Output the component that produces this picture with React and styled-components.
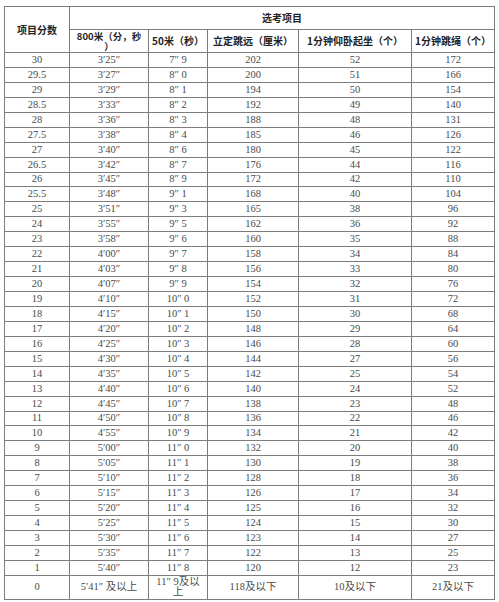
import styled, { createGlobalStyle } from 'styled-components';

const GlobalStyle = createGlobalStyle`
	html, body {
		margin: 0;
		padding: 0;
		background: #fff;
	}
`;

const rows = [
	['30', '3′25″', '7″ 9', '202', '52', '172'],
	['29.5', '3′27″', '8″ 0', '200', '51', '166'],
	['29', '3′29″', '8″ 1', '194', '50', '154'],
	['28.5', '3′33″', '8″ 2', '192', '49', '140'],
	['28', '3′36″', '8″ 3', '188', '48', '131'],
	['27.5', '3′38″', '8″ 4', '185', '46', '126'],
	['27', '3′40″', '8″ 6', '180', '45', '122'],
	['26.5', '3′42″', '8″ 7', '176', '44', '116'],
	['26', '3′45″', '8″ 9', '172', '42', '110'],
	['25.5', '3′48″', '9″ 1', '168', '40', '104'],
	['25', '3′51″', '9″ 3', '165', '38', '96'],
	['24', '3′55″', '9″ 5', '162', '36', '92'],
	['23', '3′58″', '9″ 6', '160', '35', '88'],
	['22', '4′00″', '9″ 7', '158', '34', '84'],
	['21', '4′03″', '9″ 8', '156', '33', '80'],
	['20', '4′07″', '9″ 9', '154', '32', '76'],
	['19', '4′10″', '10″ 0', '152', '31', '72'],
	['18', '4′15″', '10″ 1', '150', '30', '68'],
	['17', '4′20″', '10″ 2', '148', '29', '64'],
	['16', '4′25″', '10″ 3', '146', '28', '60'],
	['15', '4′30″', '10″ 4', '144', '27', '56'],
	['14', '4′35″', '10″ 5', '142', '25', '54'],
	['13', '4′40″', '10″ 6', '140', '24', '52'],
	['12', '4′45″', '10″ 7', '138', '23', '48'],
	['11', '4′50″', '10″ 8', '136', '22', '46'],
	['10', '4′55″', '10″ 9', '134', '21', '42'],
	['9', '5′00″', '11″ 0', '132', '20', '40'],
	['8', '5′05″', '11″ 1', '130', '19', '38'],
	['7', '5′10″', '11″ 2', '128', '18', '36'],
	['6', '5′15″', '11″ 3', '126', '17', '34'],
	['5', '5′20″', '11″ 4', '125', '16', '32'],
	['4', '5′25″', '11″ 5', '124', '15', '30'],
	['3', '5′30″', '11″ 6', '123', '14', '27'],
	['2', '5′35″', '11″ 7', '122', '13', '25'],
	['1', '5′40″', '11″ 8', '120', '12', '23'],
];

const colWidths = [65, 79, 59, 91, 113, 83];

function App() {
	return (
		<>
			<GlobalStyle />
			<Page>
				<Table>
					<colgroup>
						{colWidths.map((w, i) => (
							<col key={i} style={{ width: w }} />
						))}
					</colgroup>
					<thead>
						<tr>
							<HeadCell rowSpan={2}>
								<HeadBox $h={45}>项目分数</HeadBox>
							</HeadCell>
							<HeadCell colSpan={5}>
								<HeadBox $h={22}>选考项目</HeadBox>
							</HeadCell>
						</tr>
						<tr>
							<HeadCell>
								<HeadBox $h={22} $wrap>
									<span>800米（分，秒</span>
									<span>）</span>
								</HeadBox>
							</HeadCell>
							<HeadCell>
								<HeadBox $h={22}>50米（秒）</HeadBox>
							</HeadCell>
							<HeadCell>
								<HeadBox $h={22}>立定跳远（厘米）</HeadBox>
							</HeadCell>
							<HeadCell>
								<HeadBox $h={22}>1分钟仰卧起坐（个）</HeadBox>
							</HeadCell>
							<HeadCell>
								<HeadBox $h={22}>1分钟跳绳（个）</HeadBox>
							</HeadCell>
						</tr>
					</thead>
					<tbody>
						{rows.map((r) => (
							<tr key={r[0]}>
								{r.map((v, i) => (
									<Cell key={i}>
										<CellBox>{v}</CellBox>
									</Cell>
								))}
							</tr>
						))}
						<tr>
							<Cell>
								<CellBox $h={23}>0</CellBox>
							</Cell>
							<Cell>
								<CellBox $h={23}>5′41″ 及以上</CellBox>
							</Cell>
							<Cell>
								<CellBox $h={23} $wrap>
									<span>11″ 9及以</span>
									<span>上</span>
								</CellBox>
							</Cell>
							<Cell>
								<CellBox $h={23}>118及以下</CellBox>
							</Cell>
							<Cell>
								<CellBox $h={23}>10及以下</CellBox>
							</Cell>
							<Cell>
								<CellBox $h={23}>21及以下</CellBox>
							</Cell>
						</tr>
					</tbody>
				</Table>
			</Page>
		</>
	);
}

const Page = styled.div`
	width: 499px;
	height: 602px;
	padding: 6px 0 0 4px;
	box-sizing: border-box;
	background: #fff;
	overflow: hidden;
`;

const Table = styled.table`
	width: 490px;
	table-layout: fixed;
	border-collapse: collapse;
`;

const HeadCell = styled.th`
	border: 1px solid #7c7c7c;
	padding: 0;
	vertical-align: middle;
`;

const HeadBox = styled.div`
	height: ${(p) => p.$h}px;
	display: flex;
	flex-direction: ${(p) => (p.$wrap ? 'column' : 'row')};
	align-items: center;
	justify-content: center;
	font-family: 'Noto Sans CJK SC', sans-serif;
	font-weight: bold;
	font-size: ${(p) => (p.$wrap ? '9.5px' : '10px')};
	line-height: ${(p) => (p.$wrap ? '10px' : '12px')};
	color: #222;
	white-space: nowrap;
`;

const Cell = styled.td`
	border: 1px solid #7c7c7c;
	padding: 0;
	vertical-align: middle;
`;

const CellBox = styled.div`
	height: ${(p) => p.$h || 13.94}px;
	display: flex;
	flex-direction: ${(p) => (p.$wrap ? 'column' : 'row')};
	align-items: center;
	justify-content: center;
	font-family: 'Liberation Serif', 'Noto Sans CJK SC', serif;
	font-size: 10.5px;
	line-height: ${(p) => (p.$wrap ? '10px' : '12px')};
	color: #4a4a4a;
	white-space: nowrap;
	overflow: hidden;
`;

export default App;
